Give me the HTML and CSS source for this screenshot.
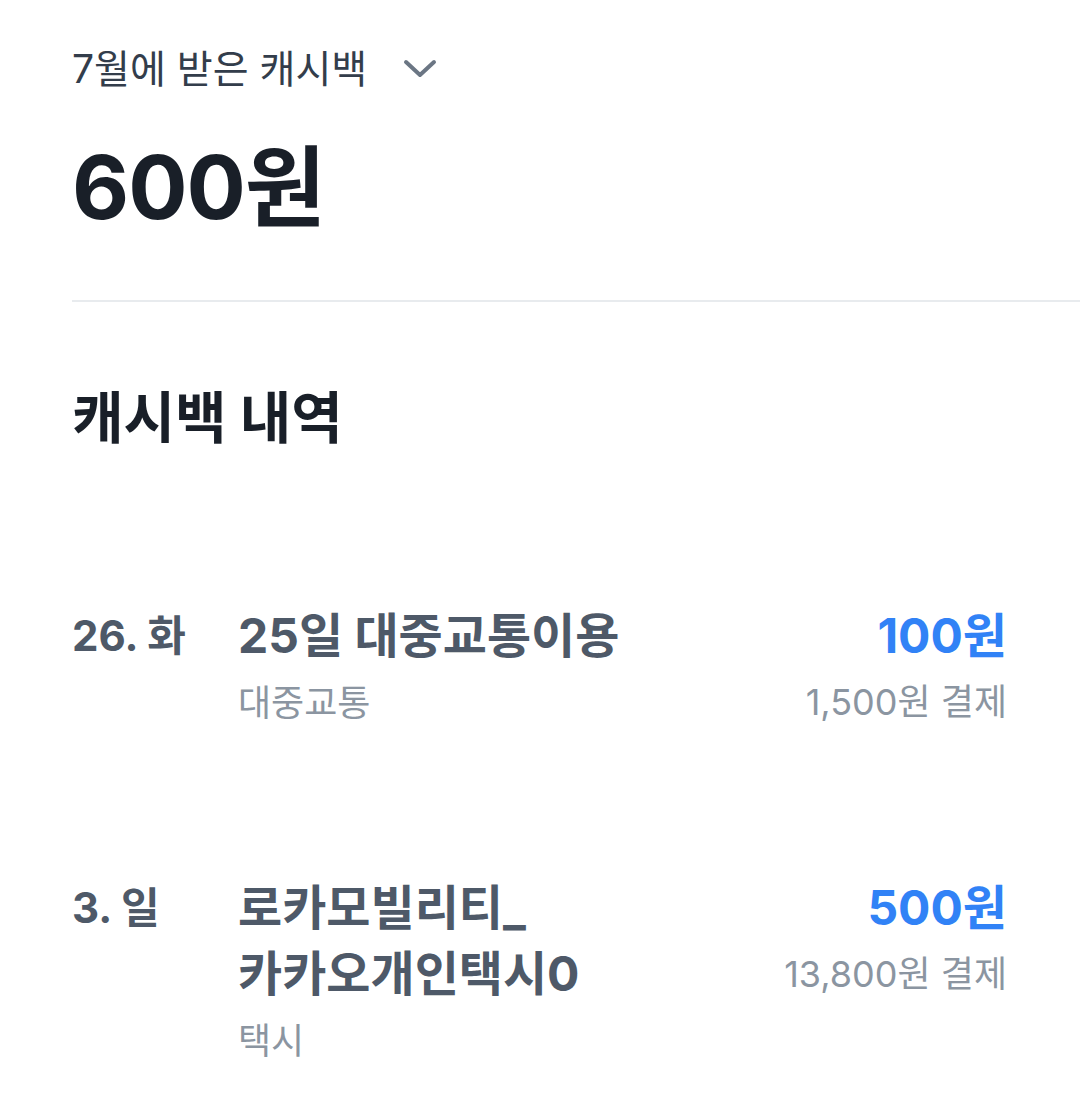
FILE: index.html
```html
<!DOCTYPE html>
<html lang="ko">
<head>
    <meta charset="UTF-8">
    <meta name="viewport" content="width=device-width, initial-scale=1.0">
    <title>캐시백</title>
    <link rel="stylesheet" href="styles.css">
</head>
<body>
    <div class="wrapper">
        <div class="summary">
            <div class="month-select">
                <span>7월에 받은 캐시백</span>
                <svg class="chevron" width="34" height="20" viewBox="0 0 34 20">
                    <path d="M3 3 L17 16 L31 3" fill="none" stroke="#6b7684" stroke-width="4" stroke-linecap="round" stroke-linejoin="round"/>
                </svg>
            </div>
            <div class="total">600원</div>
        </div>

        <div class="divider"></div>

        <div class="history">
            <h2>캐시백 내역</h2>

            <div class="item">
                <div class="date">26. 화</div>
                <div class="details">
                    <div class="name">25일 대중교통이용</div>
                    <div class="category">대중교통</div>
                </div>
                <div class="amount">
                    <div class="cashback">100원</div>
                    <div class="paid">1,500원 결제</div>
                </div>
            </div>

            <div class="item">
                <div class="date">3. 일</div>
                <div class="details">
                    <div class="name">로카모빌리티_<br>카카오개인택시0</div>
                    <div class="category">택시</div>
                </div>
                <div class="amount">
                    <div class="cashback">500원</div>
                    <div class="paid">13,800원 결제</div>
                </div>
            </div>
        </div>
    </div>
</body>
</html>
```

FILE: styles.css
```css
body {
    margin: 0;
    padding: 0;
    background-color: #fff;
}
.wrapper {
    font-family: Inter, "Noto Sans CJK KR", "Noto Sans", sans-serif;
    color: #191f28;
    padding-top: 45px;
}
.summary {
    padding: 0 73px 0 72px;
}
.month-select {
    display: flex;
    align-items: center;
    font-size: 39px;
    line-height: 48px;
    font-weight: 400;
    color: #333d4b;
}
.month-select .chevron {
    margin-left: 36px;
}
.total {
    margin-top: 39px;
    font-size: 88px;
    line-height: 110px;
    font-weight: 700;
    letter-spacing: -1px;
}
.divider {
    margin: 58px 0 0 72px;
    height: 2px;
    background-color: #e8ebee;
}
.history {
    padding: 0 73px 0 72px;
}
.history h2 {
    margin: 84px 0 0;
    font-size: 56px;
    line-height: 64px;
    font-weight: 700;
}
.item {
    display: flex;
    align-items: flex-start;
    margin-top: 153px;
}
.item + .item {
    margin-top: 140px;
}
.item .date {
    width: 166px;
    flex-shrink: 0;
    font-size: 42px;
    line-height: 66px;
    font-weight: 700;
    color: #4e5968;
}
.item .details {
    flex-grow: 1;
}
.item .details .name {
    font-size: 48px;
    line-height: 66px;
    font-weight: 700;
    color: #4e5968;
}
.item .details .category {
    margin-top: 10px;
    font-size: 36px;
    line-height: 48px;
    color: #8b95a1;
}
.item .amount {
    text-align: right;
}
.item .amount .cashback {
    font-size: 48px;
    line-height: 66px;
    font-weight: 700;
    color: #3182f6;
}
.item .amount .paid {
    font-size: 36px;
    line-height: 66px;
    color: #8b95a1;
}
```
